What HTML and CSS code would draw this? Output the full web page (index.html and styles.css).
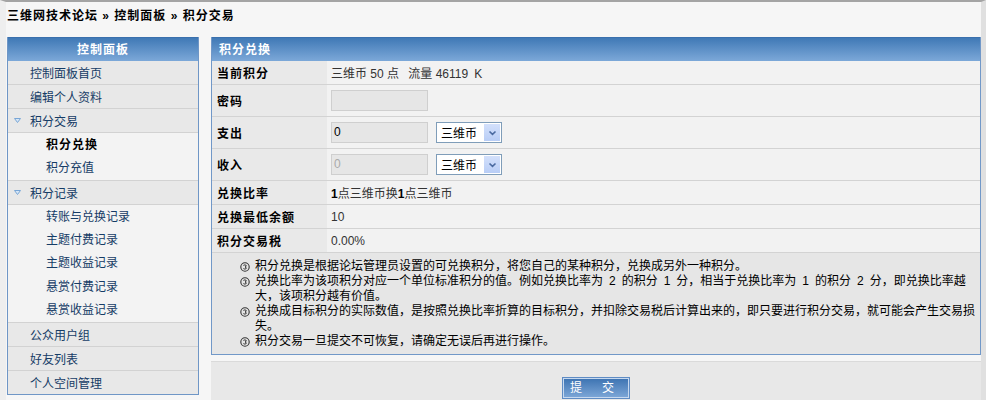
FILE: index.html
```html
<!DOCTYPE html>
<html>
<head>
  <title>积分交易</title>
  <meta charset="UTF-8">
  <link rel="stylesheet" href="styles.css">
</head>
<body>
  <div class="crumb">三维网技术论坛 » 控制面板 » 积分交易</div>
  <div class="wrap">
    <div class="side">
      <div class="side-title">控制面板</div>
      <ul class="menu">
        <li class="item">控制面板首页</li>
        <li class="item">编辑个人资料</li>
        <li class="item open"><svg class="tri" width="7" height="5" viewBox="0 0 7 5"><polygon points="0.5,0.5 6.5,0.5 3.5,4.5" fill="#d6e6f6" stroke="#79a6d6" stroke-width="1"/></svg>积分交易</li>
        <li class="subs">
          <div class="sub current">积分兑换</div>
          <div class="sub">积分充值</div>
        </li>
        <li class="item open"><svg class="tri" width="7" height="5" viewBox="0 0 7 5"><polygon points="0.5,0.5 6.5,0.5 3.5,4.5" fill="#d6e6f6" stroke="#79a6d6" stroke-width="1"/></svg>积分记录</li>
        <li class="subs long">
          <div class="sub">转账与兑换记录</div>
          <div class="sub">主题付费记录</div>
          <div class="sub">主题收益记录</div>
          <div class="sub">悬赏付费记录</div>
          <div class="sub">悬赏收益记录</div>
        </li>
        <li class="item">公众用户组</li>
        <li class="item">好友列表</li>
        <li class="item">个人空间管理</li>
      </ul>
    </div>

    <div class="main">
      <div class="box">
        <div class="box-title">积分兑换</div>
        <table class="form">
          <tr class="row">
            <th>当前积分</th>
            <td>三维币 50 点&ensp; 流量 46119&ensp;K</td>
          </tr>
          <tr class="row tall">
            <th>密码</th>
            <td><span class="txt"></span></td>
          </tr>
          <tr class="row tall">
            <th>支出</th>
            <td>
              <div class="field">
                <span class="txt">0</span>
                <span class="sel">三维币<span class="arrow"><svg width="9" height="6" viewBox="0 0 9 6"><path d="M1.5 1.5 L4.5 4.3 L7.5 1.5" fill="none" stroke="#4a6aa0" stroke-width="1.6"/></svg></span></span>
              </div>
            </td>
          </tr>
          <tr class="row tall">
            <th>收入</th>
            <td>
              <div class="field">
                <span class="txt off">0</span>
                <span class="sel">三维币<span class="arrow"><svg width="9" height="6" viewBox="0 0 9 6"><path d="M1.5 1.5 L4.5 4.3 L7.5 1.5" fill="none" stroke="#4a6aa0" stroke-width="1.6"/></svg></span></span>
              </div>
            </td>
          </tr>
          <tr class="row">
            <th>兑换比率</th>
            <td><b>1</b>点三维币换<b>1</b>点三维币</td>
          </tr>
          <tr class="row">
            <th>兑换最低余额</th>
            <td>10</td>
          </tr>
          <tr class="row">
            <th>积分交易税</th>
            <td>0.00%</td>
          </tr>
        </table>
        <ul class="notes">
          <li><svg class="ico" width="10" height="10" viewBox="0 0 10 10"><circle cx="5" cy="5" r="4.2" fill="none" stroke="#333" stroke-width="1.1"/><path d="M3.4 3.4 Q5 2.3 6.2 3.4 Q6.5 4.6 5 5 Q6.6 5.4 6.2 6.6 Q5 7.7 3.4 6.6" fill="none" stroke="#333" stroke-width="1"/></svg><span>积分兑换是根据论坛管理员设置的可兑换积分，将您自己的某种积分，兑换成另外一种积分。</span></li>
          <li><svg class="ico" width="10" height="10" viewBox="0 0 10 10"><circle cx="5" cy="5" r="4.2" fill="none" stroke="#333" stroke-width="1.1"/><path d="M3.4 3.4 Q5 2.3 6.2 3.4 Q6.5 4.6 5 5 Q6.6 5.4 6.2 6.6 Q5 7.7 3.4 6.6" fill="none" stroke="#333" stroke-width="1"/></svg><span>兑换比率为该项积分对应一个单位标准积分的值。例如兑换比率为&ensp;2&ensp;的积分&ensp;1&ensp;分，相当于兑换比率为&ensp;1&ensp;的积分&ensp;2&ensp;分，即兑换比率越大，该项积分越有价值。</span></li>
          <li><svg class="ico" width="10" height="10" viewBox="0 0 10 10"><circle cx="5" cy="5" r="4.2" fill="none" stroke="#333" stroke-width="1.1"/><path d="M3.4 3.4 Q5 2.3 6.2 3.4 Q6.5 4.6 5 5 Q6.6 5.4 6.2 6.6 Q5 7.7 3.4 6.6" fill="none" stroke="#333" stroke-width="1"/></svg><span>兑换成目标积分的实际数值，是按照兑换比率折算的目标积分，并扣除交易税后计算出来的，即只要进行积分交易，就可能会产生交易损失。</span></li>
          <li><svg class="ico" width="10" height="10" viewBox="0 0 10 10"><circle cx="5" cy="5" r="4.2" fill="none" stroke="#333" stroke-width="1.1"/><path d="M3.4 3.4 Q5 2.3 6.2 3.4 Q6.5 4.6 5 5 Q6.6 5.4 6.2 6.6 Q5 7.7 3.4 6.6" fill="none" stroke="#333" stroke-width="1"/></svg><span>积分交易一旦提交不可恢复，请确定无误后再进行操作。</span></li>
        </ul>
      </div>
      <div class="submit">
        <button class="btn" type="button"><span>提</span><span>交</span></button>
      </div>
    </div>
  </div>
</body>
</html>
```

FILE: styles.css
```css
html {
  background: #f6f6f6;
}

body {
  margin: 0;
  height: 398px;
  overflow: hidden;
  border-top: 2px solid #a4a4a4;
  border-left: 6px solid #eeeeee;
  border-right: 5px solid #e0e0e0;
  font-family: "Liberation Sans", "Noto Sans CJK SC", sans-serif;
  font-size: 12px;
  color: #333;
}

.crumb {
  padding: 6px 0 13px 1px;
  line-height: 16px;
  font-weight: bold;
  letter-spacing: 1px;
  color: #000;
}

.wrap {
  display: flex;
  gap: 12px;
  padding-left: 1px;
}

/* sidebar */
.side {
  width: 190px;
  flex: none;
  border: 1px solid #6f96c6;
  border-top: none;
  align-self: flex-start;
}

.side-title,
.box-title {
  height: 24px;
  line-height: 24px;
  border-top: 1px solid #3a70ad;
  box-sizing: border-box;
  background: linear-gradient(#4079b6, #7ca8d8);
  color: #fff;
  font-weight: bold;
  letter-spacing: 1px;
}

.side-title {
  text-align: center;
}

.menu {
  list-style: none;
  margin: 0;
  padding: 0;
}

.item {
  display: flex;
  align-items: center;
  height: 24px;
  box-sizing: border-box;
  padding-left: 22px;
  background: #e8e8e8;
  border-bottom: 1px solid #d2d2d2;
  color: #163c66;
}

.item.open {
  padding-left: 6px;
}

.tri {
  margin-right: 9px;
}

.subs {
  background: #f3f3f3;
  border-bottom: 1px solid #d2d2d2;
  padding-top: 1px;
}

.sub {
  height: 23px;
  line-height: 23px;
  padding-left: 38px;
  color: #163c66;
}

.subs.long .sub {
  height: 23.2px;
}

.sub.current {
  font-weight: bold;
  letter-spacing: 1px;
  color: #000;
}

.menu .item:last-child {
  border-bottom: none;
  height: 23px;
}

/* main */
.main {
  flex: 1;
}

.box {
  border: 1px solid #7198c8;
  border-top: none;
}

.box-title {
  padding-left: 7px;
}

.form {
  width: 100%;
  border-collapse: collapse;
}

.row th,
.row td {
  height: 23px;
  padding: 0;
  border-bottom: 1px solid #d3d3d3;
  text-align: left;
}

.row th {
  width: 110px;
  padding-left: 5px;
  background: #e9e9e9;
  color: #000;
  letter-spacing: 1px;
}

.row td {
  padding-left: 4px;
  background: #f2f2f2;
}

.row.tall th,
.row.tall td {
  height: 31px;
}

.row td b {
  color: #000;
}

.field {
  display: flex;
  align-items: center;
  gap: 8px;
}

.txt {
  display: block;
  width: 93px;
  height: 19px;
  line-height: 19px;
  padding-left: 2px;
  background: #e6e6e6;
  border: 1px solid #cfcfcf;
  color: #000;
}

.txt.off {
  color: #aaa;
}

.sel {
  display: flex;
  align-items: center;
  justify-content: space-between;
  width: 59px;
  height: 19px;
  padding-left: 4px;
  padding-right: 1px;
  background: #fff;
  border: 1px solid #7f9db9;
  color: #000;
}

.arrow {
  display: flex;
  align-items: center;
  justify-content: center;
  width: 16px;
  height: 17px;
  background: linear-gradient(#d3e0fb, #b8cdf6);
}

.notes {
  list-style: none;
  margin: 0;
  padding: 6px 5px 5px 28px;
  background: #e6e6e6;
  line-height: 15px;
  color: #000;
}

.notes li {
  display: flex;
  align-items: flex-start;
  gap: 5px;
}

.notes li span {
  width: 720px;
}

.ico {
  flex: none;
  margin-top: 3px;
}

.submit {
  margin-top: 6px;
  height: 60px;
  padding-top: 16px;
  box-sizing: border-box;
  background: #e8e8e8;
  border-top: 1px solid #dadada;
  text-align: center;
}

.btn {
  width: 66px;
  height: 20px;
  padding: 0 8px 0 0;
  border: 1px solid #c7d9ef;
  outline: 1px solid #5f8cc4;
  background: linear-gradient(#3f75b3, #7ba5d6);
  color: #fff;
  font-family: "Liberation Sans", "Noto Sans CJK SC", sans-serif;
  font-size: 12px;
  line-height: 16px;
}

.btn span + span {
  margin-left: 20px;
}
```
